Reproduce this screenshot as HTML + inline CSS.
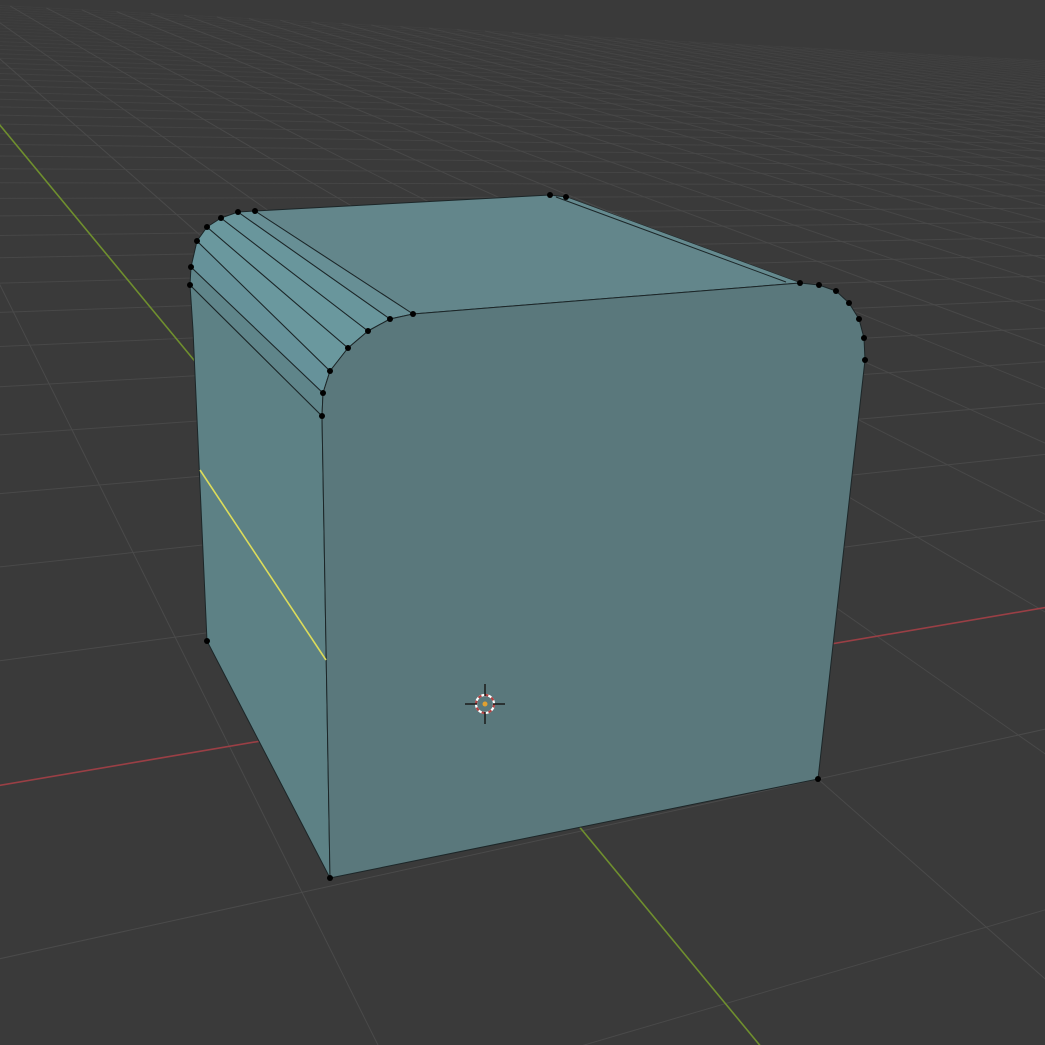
<!DOCTYPE html>
<html><head><meta charset="utf-8"><style>
html,body{margin:0;padding:0;background:#3a3a3a;overflow:hidden;width:1045px;height:1045px}
svg{display:block;overflow:hidden}
</style></head><body>
<svg id="s" width="1045" height="1045" viewBox="0 0 1045 1045" xmlns="http://www.w3.org/2000/svg">
<rect width="1045" height="1045" fill="#3a3a3a"/>
<g id="grid" stroke="#4a4a4a" stroke-width="1" fill="none"></g>
<g id="axes" stroke-width="1.6" fill="none"></g>
<g id="cube" stroke="#1c2628" stroke-width="1" stroke-linejoin="round">
  <polygon fill="#5d8185" points="190,285 193,330 207,641 330,878 322,416"/>
  <polygon fill="#63868b" points="255,211 550,195 566,197 800,283 413,314"/>
  <polygon fill="#658a8f" stroke="none" points="566,197 800,283 786,282 556,197"/>
  <line x1="556" y1="197" x2="786" y2="282"/>
  <polygon fill="#5f858a" points="190,285 191,267 323,393 322,416"/>
  <polygon fill="#66929a" points="191,267 197,241 330,371 323,393"/>
  <polygon fill="#6a989e" points="197,241 207,227 348,348 330,371"/>
  <polygon fill="#6a989e" points="207,227 221,218 368,331 348,348"/>
  <polygon fill="#69969c" points="221,218 238,212 390,319 368,331"/>
  <polygon fill="#678f95" points="238,212 255,211 413,314 390,319"/>
  <path fill="#5a787c" d="M413,314 L800,283 L819,285 L836,291 L849,303 L859,319 L864,338 L865,360 L818,779 L330,878 L322,416 L323,393 L330,371 L348,348 L368,331 L390,319 Z"/>
  <line x1="200" y1="470" x2="326" y2="660" stroke="#dcdc5a" stroke-width="1.6"/>
</g>
<g id="dots" fill="#000"></g>
<g id="cursor">
  <circle cx="485" cy="704" r="9" fill="none" stroke="#fff" stroke-width="2.2"/>
  <circle cx="485" cy="704" r="9" fill="none" stroke="#b04040" stroke-width="2.2" stroke-dasharray="3.5 3.5"/>
  <g stroke="#1a1a1a" stroke-width="1.5">
    <line x1="465" y1="704" x2="477" y2="704"/><line x1="493" y1="704" x2="505" y2="704"/>
    <line x1="485" y1="684" x2="485" y2="696"/><line x1="485" y1="712" x2="485" y2="724"/>
  </g>
  <circle cx="485" cy="704" r="2.5" fill="#e0a030"/>
</g>
</svg>
<script>
(function(){
var NS="http://www.w3.org/2000/svg";
var V1=[3500,190,1],V2=[-200,-117,1],O=[478,704,1];
var A11=V1[0]-818*V1[2], A12=-(V2[0]-818*V2[2]), B1=818-O[0];
var A21=V1[1]-779*V1[2], A22=-(V2[1]-779*V2[2]), B2=779-O[1];
var det=A11*A22-A12*A21;
var a=(B1*A22-A12*B2)/det, b=(A11*B2-B1*A21)/det;
function P(u,v){var x=a*u*V1[0]+b*v*V2[0]+O[0],y=a*u*V1[1]+b*v*V2[1]+O[1],w=a*u*V1[2]+b*v*V2[2]+1;return [x/w,y/w,w];}
var g=document.getElementById('grid'),ax=document.getElementById('axes');
function seg(par,p,q,col,op){var l=document.createElementNS(NS,'line');l.setAttribute('x1',p[0].toFixed(1));l.setAttribute('y1',p[1].toFixed(1));l.setAttribute('x2',q[0].toFixed(1));l.setAttribute('y2',q[1].toFixed(1));if(col)l.setAttribute('stroke',col);if(op!=null)l.setAttribute('stroke-opacity',op);par.appendChild(l);}
var L=45,eps=0.03;
for(var k=-45;k<=45;k++){
  var op=Math.max(0.25,1-Math.abs(k)/50);
  var vmin=(eps-1-a*k)/b; var v0=Math.max(-L,vmin);
  if(v0<L){ var p=P(k,v0),q=P(k,L); if(k==0)seg(ax,p,q,'#6f8f2e'); else seg(g,p,q,null,op);}
  var umin=(eps-1-b*k)/a; var u0=Math.max(-L,umin);
  if(u0<L){ var p=P(u0,k),q=P(L,k); if(k==0)seg(ax,p,q,'#9a3f45'); else seg(g,p,q,null,op);}
}
var d=document.getElementById('dots');
var pts=[[190,285],[191,267],[197,241],[207,227],[221,218],[238,212],[255,211],[322,416],[323,393],[330,371],[348,348],[368,331],[390,319],[413,314],[800,283],[819,285],[836,291],[849,303],[859,319],[864,338],[865,360],[818,779],[330,878],[207,641],[550,195],[566,197]];
pts.forEach(function(p){var c=document.createElementNS(NS,'circle');c.setAttribute('cx',p[0]);c.setAttribute('cy',p[1]);c.setAttribute('r',3);d.appendChild(c);});
})();
</script>
</body></html>
